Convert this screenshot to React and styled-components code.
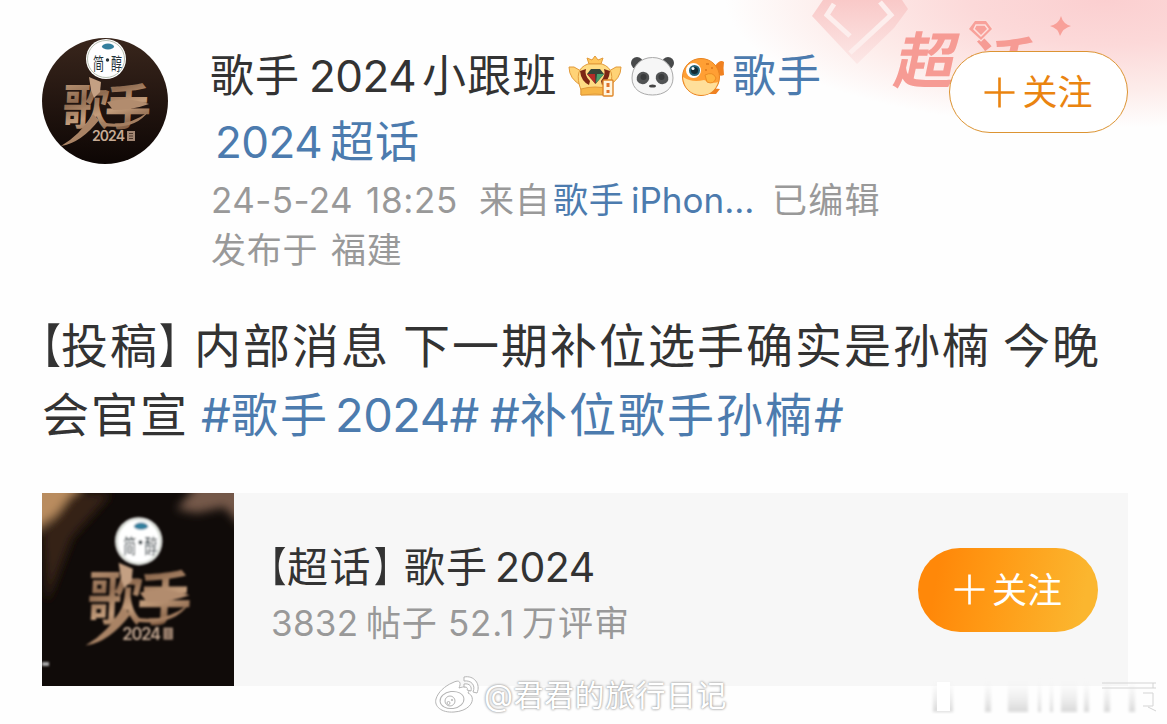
import React from "react";
import styled, { createGlobalStyle } from "styled-components";

const GlobalStyle = createGlobalStyle`
body {
    margin: 0;
    background: #fefefe;
    font-family: Inter, "Noto Sans CJK SC", sans-serif;
    overflow: hidden;
}
`;

const Page = styled.div`
    position: relative;
    box-sizing: border-box;
    width: 1167px;
    height: 724px;
    overflow: hidden;
    background: #fefefe;
`;

const Backdrop = styled.svg`
    position: absolute;
    top: 0;
    right: 0;
`;

const Post = styled.article`
    position: relative;
    display: flex;
    flex-direction: column;
    padding: 38px 39px 0 42px;
`;

const Header = styled.header`
    display: flex;
    align-items: flex-start;
    height: 268px;
`;

const Avatar = styled.svg`
    flex: none;
    width: 126px;
    height: 126px;
    border-radius: 50%;
    margin-right: 42px;
`;

const Author = styled.div`
    flex: 1;
    padding-top: 5px;
`;

const Line = styled.div`
    display: flex;
    align-items: center;
    height: ${(p) => p.$height}px;
    line-height: ${(p) => p.$height}px;
    font-size: ${(p) => p.$size}px;
    color: ${(p) => p.$color || "#333"};
    white-space: pre;
    padding-left: ${(p) => p.$indent || 0}px;
`;

const Run = styled.span`
    flex: none;
    width: ${(p) => p.$width}px;
    letter-spacing: ${(p) => p.$track || 0}px;
    color: ${(p) => (p.$link ? "#4c7bae" : "inherit")};
`;

// half-width lenticular brackets
const Bracket = styled.span`
    flex: none;
    width: ${(p) => p.$width}px;
    font-feature-settings: "halt";
    transform: scaleX(0.8);
    transform-origin: left;
`;

const Emoji = styled.svg`
    flex: none;
    margin-right: ${(p) => p.$gap}px;
`;

const Follow = styled.button`
    display: flex;
    align-items: center;
    justify-content: center;
    flex: none;
    box-sizing: border-box;
    width: ${(p) => (p.$filled ? 180 : 179)}px;
    height: ${(p) => (p.$filled ? 84 : 82)}px;
    padding: 0;
    gap: 7px;
    font-family: inherit;
    font-size: 35px;
    line-height: 50px;
    border-radius: 42px;
    border: ${(p) => (p.$filled ? "none" : "1.5px solid #dc9433")};
    color: ${(p) => (p.$filled ? "#fff" : "#ea8410")};
    background: ${(p) => (p.$filled ? "linear-gradient(100deg, #ff8809 12%, #ff9a15 42%, #fbb62f 90%)" : "#fff")};
    margin-top: ${(p) => (p.$filled ? 0 : 13)}px;
`;

const Body = styled.div`
    height: 187px;
    padding-top: 5px;
    box-sizing: border-box;
`;

const Card = styled.section`
    display: flex;
    align-items: center;
    width: 1086px;
    height: 193px;
    box-sizing: border-box;
    padding-right: 30px;
    background: #f7f7f7;
`;

const Thumb = styled.svg`
    flex: none;
    width: 192px;
    height: 193px;
`;

const CardText = styled.div`
    flex: 1;
    padding: 10px 0 0 34px;
`;

const Watermark = styled.div`
    position: absolute;
    left: 434px;
    top: 674px;
    display: flex;
    align-items: center;
    height: 42px;
    font-size: 30px;
    line-height: 42px;
    color: #fff;
    letter-spacing: 0.5px;
    white-space: nowrap;
    text-shadow: 0 0 2px #989898, 0 0 3px #aeaeae;
`;

const Smear = styled.svg`
    position: absolute;
    left: 930px;
    top: 678px;
`;

const Plus = () => (
    <svg width="31" height="31" viewBox="0 0 31 31" fill="none" stroke="currentColor" strokeWidth="2.6">
        <path d="M15.500 0.500V30.500M0.500 15.500H30.500" />
    </svg>
);

const FollowButton = ({ filled }) => (
    <Follow $filled={filled}>
        <Plus />
        <span>关注</span>
    </Follow>
);

const ShowLogo = () => (
    <>
        <g transform="translate(21 87) skewX(-3) scale(1.050 1.120)">
            <text fontSize="44" fontWeight="700" textLength="84" fontFamily="Noto Sans CJK SC" fill="url(#gold)">歌手</text>
        </g>
        <path d="M52 76Q39 97 20 108Q40 105 58 82Z" fill="#a98365" />
        <path d="M48 39L60 44L59 54L53 60L50 52Z" fill="#c4a083" />
        <path d="M66 64Q86 58 108 66Q92 72 72 72Z" fill="#b28c6e" />
        <path d="M60 84Q86 90 107 74Q94 92 62 88Z" fill="#a47e60" />
        <circle cx="65" cy="21" r="20" fill="#fff" />
        <circle cx="65" cy="21" r="18.500" fill="none" stroke="#b7bfb1" />
        <ellipse cx="67" cy="8.500" rx="6" ry="3" fill="#337f9d" />
        <g transform="translate(52 32) scale(0.850 1.300)">
            <text fontSize="13" fontFamily="Noto Sans CJK SC" fill="#253238">简</text>
        </g>
        <circle cx="66.500" cy="22" r="1.700" fill="#253238" />
        <g transform="translate(70 32) scale(0.850 1.300)">
            <text fontSize="13" fontFamily="Noto Sans CJK SC" fill="#253238">醇</text>
        </g>
        <text x="51" y="103" fontSize="14" fontWeight="600" textLength="33" fill="#c6aa94">2024</text>
        <rect x="86" y="93" width="8" height="10" fill="#a18673" />
        <path d="M88 95.500H92M88 98H92M88 100.500H92" stroke="#4a372c" />
    </>
);

const Crown = () => (
    <Emoji width="54" height="42" viewBox="0 0 54 42" $gap={9}>
        <g stroke="#e29a3a" strokeWidth="1">
            <path d="M13 16L6 12L1 12Q1 24 14 31ZM41 16L48 12L53 12Q53 24 40 31Z" fill="#ffd376" />
            <path d="M21 9L19 3L24 5L27 1L30 5L35 3L33 9Z" fill="#ffc65c" />
            <path d="M13 35Q5 14 20 9H34Q49 14 41 35V40H13Z" fill="#ffdc84" />
            <path d="M13 34Q27 30 41 34V40Q27 38 13 40Z" fill="#f7b648" />
        </g>
        <path d="M12 16Q13 26 21 30L22 26Q16 20 18 14ZM42 16Q41 26 34 30L33 26Q38 20 36 14Z" fill="#7c2714" />
        <path d="M19 19L23 14H32L36 19L27.500 29Z" fill="#374337" />
        <path d="M19 19H27L27.500 29Z" fill="#b62c27" />
        <path d="M29 19H36L28 28Z" fill="#4aa16d" />
        <rect x="35" y="25" width="10" height="16" rx="1" fill="#fff5df" stroke="#df8728" strokeWidth="1.400" />
        <path d="M40 28V32M40 35V38" stroke="#df742c" strokeWidth="3" />
    </Emoji>
);

const Panda = () => (
    <Emoji width="43" height="40" viewBox="0 0 43 40" $gap={8}>
        <circle cx="6" cy="7" r="6" fill="#484a4b" />
        <circle cx="37" cy="7" r="6" fill="#484a4b" />
        <path d="M21.500 1.500C34 1.500 42 11 42 22C42 33 33 39 21.500 39S1 33 1 22C1 11 9 1.500 21.500 1.500Z" fill="#f6f6f6" stroke="#aaa" />
        <ellipse cx="12" cy="22" rx="6.500" ry="6" transform="rotate(-35 12 22)" fill="#515354" />
        <ellipse cx="31" cy="22" rx="6.500" ry="6" transform="rotate(35 31 22)" fill="#515354" />
        <circle cx="12.500" cy="21" r="3" fill="#393b3c" />
        <circle cx="30.500" cy="21" r="3" fill="#393b3c" />
        <ellipse cx="21.500" cy="30" rx="3.500" ry="1.600" fill="#444" />
    </Emoji>
);

const Fish = () => (
    <Emoji width="43" height="40" viewBox="0 0 43 40" $gap={7}>
        <path d="M33 10Q38 3 42 6Q41 12 42 19Q37 21 34 17ZM29 32L38 33L34 38H27Z" fill="#f08120" />
        <circle cx="19" cy="21" r="18.500" fill="#ff9f34" stroke="#e8831f" />
        <path d="M1 21Q10 27 22 24Q32 28 36 26Q32 39 19 39Q3 38 1 21Z" fill="#ffdf9a" />
        <path d="M23 19Q31 15 34 22Q32 29 25 26Z" fill="#ffb33f" stroke="#ed8b22" />
        <circle cx="11.500" cy="14.500" r="7.500" fill="#fff" />
        <circle cx="12.500" cy="14.500" r="5.500" fill="#276477" />
        <circle cx="12.500" cy="14.500" r="3.500" fill="#122a33" />
        <circle cx="11" cy="12.500" r="1.500" fill="#fff" />
        <path d="M24 8h3M29 12h2M23 14h2" stroke="#e5811f" strokeWidth="2" />
    </Emoji>
);

const App = () => {
    return (
        <Page>
            <GlobalStyle />
            <Backdrop width="467" height="160" viewBox="700 0 467 160">
                <defs>
                    <radialGradient id="blush" gradientUnits="userSpaceOnUse" cx="0" cy="0" r="1" gradientTransform="translate(1105 0) scale(380 128)">
                        <stop offset="0" stopColor="#fbcfd0" />
                        <stop offset="0.350" stopColor="#fcd9d9" />
                        <stop offset="0.700" stopColor="#fdecea" />
                        <stop offset="1" stopColor="#fefefe" />
                    </radialGradient>
                    <linearGradient id="gem" x1="0" y1="0" x2="0" y2="1">
                        <stop offset="0" stopColor="#f9c9c8" />
                        <stop offset="1" stopColor="#fce8e7" />
                    </linearGradient>
                </defs>
                <rect x="700" width="467" height="160" fill="url(#blush)" />
                <path d="M823 0L812 16L857 64L894 28L908 9L902 0Z" fill="url(#gem)" />
                <path d="M834 4L827 15L850 36M880 2L891 15L850 53" fill="none" stroke="#fdeeed" strokeWidth="5" />
                <g fontSize="61" fontWeight="700" fontFamily="Noto Sans CJK SC" fill="#f69b94">
                    <g transform="translate(892 83) skewX(-12)">
                        <text>超</text>
                    </g>
                    <g transform="translate(962 88) skewX(-12) scale(1.080 1)">
                        <text>话</text>
                    </g>
                </g>
                <path d="M975 21H986L992 29L981 40L969 29Z" fill="#f8a19a" stroke="#fcdedc" strokeWidth="2.500" paintOrder="stroke" />
                <path d="M976 25H985L988 29L981 36L974 29Z" fill="none" stroke="#fde0dd" strokeWidth="1.500" />
                <path d="M1061 16Q1063 24 1071 26Q1063 28 1060 36Q1058 28 1050 26Q1059 24 1061 16Z" fill="#f8a099" />
            </Backdrop>
            <Post>
                <Header>
                    <Avatar viewBox="0 0 126 126">
                        <defs>
                            <linearGradient id="gold" x1="0" y1="0" x2="0.400" y2="1">
                                <stop offset="0" stopColor="#d0aa88" />
                                <stop offset="0.450" stopColor="#8f6b50" />
                                <stop offset="0.700" stopColor="#c29c7b" />
                                <stop offset="1" stopColor="#7d583f" />
                            </linearGradient>
                            <linearGradient id="night" x1="0" y1="0" x2="0" y2="1">
                                <stop offset="0" stopColor="#39261c" />
                                <stop offset="0.550" stopColor="#21140f" />
                                <stop offset="1" stopColor="#0d0604" />
                            </linearGradient>
                        </defs>
                        <rect width="126" height="126" fill="url(#night)" />
                        <g transform="translate(-1 0)">
                            <ShowLogo />
                        </g>
                    </Avatar>
                    <Author>
                        <Line $height={66} $size={44}>
                            <Run $width={99} $track={1}>歌手</Run>
                            <Run $width={113} $track={-0.5}>2024</Run>
                            <Run $width={146} $track={1.3}>小跟班</Run>
                            <Crown />
                            <Panda />
                            <Fish />
                            <Run $width={92} $track={1} $link>歌手</Run>
                        </Line>
                        <Line $height={66} $size={44} $indent={5}>
                            <Run $width={115} $track={-0.5} $link>2024</Run>
                            <Run $width={92} $track={1} $link>超话</Run>
                        </Line>
                        <Line $height={50} $size={35} $color="#999" $indent={1}>
                            <Run $width={155} $track={0.4}>24-5-24</Run>
                            <Run $width={113} $track={0.7}>18:25</Run>
                            <Run $width={74} $track={0.8}>来自</Run>
                            <Run $width={78} $track={0.8} $link>歌手</Run>
                            <Run $width={141} $link>iPhon...</Run>
                            <Run $width={112} $track={1.2}>已编辑</Run>
                        </Line>
                        <Line $height={50} $size={35} $color="#999" $indent={1}>
                            <Run $width={120} $track={0.8}>发布于</Run>
                            <Run $width={80} $track={0.8}>福建</Run>
                        </Line>
                    </Author>
                    <FollowButton />
                </Header>
                <Body>
                    <Line $height={69} $size={47}>
                        <Bracket $width={19}>【</Bracket>
                        <Run $width={98} $track={2}>投稿</Run>
                        <Bracket $width={35}>】</Bracket>
                        <Run $width={209} $track={2}>内部消息</Run>
                        <Run $width={600} $track={2}>下一期补位选手确实是孙楠</Run>
                        <Run $width={100} $track={2}>今晚</Run>
                    </Line>
                    <Line $height={69} $size={47}>
                        <Run $width={159} $track={2}>会官宣</Run>
                        <Run $width={30} $link>#</Run>
                        <Run $width={104} $track={2} $link>歌手</Run>
                        <Run $width={155} $track={-0.5} $link>2024#</Run>
                        <Run $width={30} $link>#</Run>
                        <Run $width={294} $track={2} $link>补位歌手孙楠</Run>
                        <Run $width={32} $link>#</Run>
                    </Line>
                </Body>
                <Card>
                    <Thumb viewBox="0 0 192 193">
                        <defs>
                            <filter id="soft" x="-50%" y="-50%" width="200%" height="200%">
                                <feGaussianBlur stdDeviation="5" />
                            </filter>
                            <filter id="slight">
                                <feGaussianBlur stdDeviation="1.100" />
                            </filter>
                        </defs>
                        <rect width="192" height="193" fill="#100b09" />
                        <g filter="url(#soft)">
                            <path d="M-10 -10H42L25 12L-10 42Z" fill="#b98c5f" />
                            <path d="M30 0H70L30 45L5 110L0 40Z" fill="#352015" />
                            <path d="M135 16L155 -8H202V36L182 14L155 20Z" fill="#745949" />
                        </g>
                        <g filter="url(#slight)">
                            <g transform="translate(20 23) scale(1.180 1.200)">
                                <ShowLogo />
                            </g>
                            <path d="M0 171H7" stroke="#aaa" strokeWidth="4" />
                        </g>
                    </Thumb>
                    <CardText>
                        <Line $height={58} $size={41} $indent={2}>
                            <Bracket $width={17}>【</Bracket>
                            <Run $width={87} $track={1.5}>超话</Run>
                            <Bracket $width={30}>】</Bracket>
                            <Run $width={91} $track={1}>歌手</Run>
                            <Run $width={104} $track={-0.5}>2024</Run>
                        </Line>
                        <Line $height={55} $size={35} $color="#999" $indent={3}>
                            <Run $width={95} $track={0.3}>3832</Run>
                            <Run $width={82} $track={0.8}>帖子</Run>
                            <Run $width={74} $track={0.8}>52.1</Run>
                            <Run $width={110} $track={1}>万评审</Run>
                        </Line>
                    </CardText>
                    <FollowButton filled />
                </Card>
            </Post>
            <Watermark>
                <svg width="50" height="40" viewBox="0 0 50 40" fill="#fff" stroke="#b5b5b5" strokeWidth="1">
                    <path d="M18 8C27 3 27 9 25 13C34 10 37 13 34 18C43 22 38 36 20 37C7 38 0 31 2 24C4 17 11 11 18 8Z" />
                    <ellipse cx="18" cy="25" rx="12" ry="8.500" transform="rotate(-8 18 25)" />
                    <circle cx="16" cy="26" r="5" />
                    <circle cx="14.500" cy="28" r="1.500" />
                    <circle cx="18" cy="25" r="0.700" />
                    <path d="M30 2C40 0 47 9 43 18L39 17C42 10 37 5 30 6ZM30 9C36 8 38 12 37 16L33 15C34 13 33 12 30 12Z" />
                </svg>
                <span>@君君的旅行日记</span>
            </Watermark>
            <Smear width="230" height="36">
                <defs>
                    <linearGradient id="down" x1="0" y1="0" x2="0" y2="1">
                        <stop offset="0" stopColor="#eee" stopOpacity="0" />
                        <stop offset="1" stopColor="#d8d8d8" />
                    </linearGradient>
                    <filter id="hazy">
                        <feGaussianBlur stdDeviation="1.500" />
                    </filter>
                </defs>
                <g fill="url(#down)" filter="url(#hazy)">
                    <rect x="3" y="2" width="20" height="32" />
                    <rect x="55" y="2" width="6" height="32" />
                    <rect x="78" y="2" width="20" height="32" />
                    <rect x="108" y="2" width="3" height="32" />
                    <rect x="120" y="2" width="3" height="32" />
                    <rect x="131" y="2" width="16" height="32" />
                    <rect x="154" y="2" width="5" height="32" />
                    <rect x="174" y="2" width="6" height="32" />
                    <rect x="199" y="2" width="6" height="32" />
                </g>
                <rect x="7" y="4" width="13" height="29" fill="#fff" />
                <path d="M172 5H226M172 10H226M223 5V10M213 15H223V28H213M218 29L226 33" fill="none" stroke="#d4d4d4" />
            </Smear>
        </Page>
    );
};

export default App;
